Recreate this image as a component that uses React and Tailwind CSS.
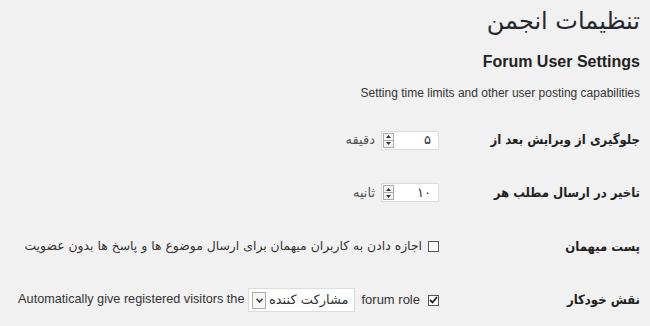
import React from "react";

const fa = { fontFamily: '"DejaVu Sans", "Liberation Sans", sans-serif' };
const faC = { fontFamily: '"DejaVu Sans Condensed", "DejaVu Sans", "Liberation Sans", sans-serif', fontStretch: "condensed" };

function NumberInput({ value }) {
  return (
    <div className="flex h-[19px] w-[58px] items-center border border-[#dcdcdc] bg-white">
      <span className="flex-1 pr-[7px] text-right text-[13px] text-[#333]" style={fa}>{value}</span>
      <div className="ml-[1px] flex h-[15px] w-[11px] flex-col border border-[#aaa] bg-[#f6f6f6]">
        <div className="flex flex-1 items-center justify-center border-b border-[#aaa]">
          <svg width="5" height="3" viewBox="0 0 5 3"><path d="M0 3 L2.5 0 L5 3Z" fill="#333" /></svg>
        </div>
        <div className="flex flex-1 items-center justify-center">
          <svg width="5" height="3" viewBox="0 0 5 3"><path d="M0 0 L2.5 3 L5 0Z" fill="#333" /></svg>
        </div>
      </div>
    </div>
  );
}

function Checkbox({ checked }) {
  return (
    <span className="inline-flex h-[11px] w-[11px] shrink-0 items-center justify-center border border-[#555] bg-white">
      {checked && (
        <svg width="9" height="8" viewBox="0 0 9 8">
          <path d="M1 4 L3.5 6.5 L8 1" stroke="#222" strokeWidth="1.8" fill="none" />
        </svg>
      )}
    </span>
  );
}

function Row({ label, children, h }) {
  return (
    <div className={`flex items-center ${h}`}>
      <div className="w-[201px] shrink-0 text-[13px] font-bold text-[#222]" style={faC}>{label}</div>
      <div className="flex items-center">{children}</div>
    </div>
  );
}

export default function App() {
  return (
    <div dir="rtl" className="h-[326px] w-[650px] overflow-hidden bg-[#f1f1f1] pr-[10px] text-[#333]" style={{ fontFamily: '"Liberation Sans", Arial, sans-serif' }}>
      <h1 className="pt-[6px] text-[24px] leading-[30px] text-[#23282d]" style={fa}>تنظیمات انجمن</h1>
      <h2 className="mt-[16px] text-[16px] font-bold leading-[20px] text-[#222]">Forum User Settings</h2>
      <p className="mt-[13px] text-[12px] leading-[16px] text-[#333]">Setting time limits and other user posting capabilities</p>
      <div className="mt-[13px]">
        <Row label="جلوگیری از ویرایش بعد از" h="h-[52px]">
          <NumberInput value="۵" />
          <span className="mr-[6px] text-[13px] text-[#555]" style={fa}>دقیقه</span>
        </Row>
        <Row label="تاخیر در ارسال مطلب هر" h="h-[53px]">
          <NumberInput value="۱۰" />
          <span className="mr-[6px] text-[13px] text-[#555]" style={fa}>ثانیه</span>
        </Row>
        <Row label="پست میهمان" h="h-[55px]">
          <Checkbox />
          <span className="mr-[6px] text-[12.4px] text-[#333]" style={fa}>اجازه دادن به کاربران میهمان برای ارسال موضوع ها و پاسخ ها بدون عضویت</span>
        </Row>
        <Row label="نقش خودکار" h="h-[52px]">
          <Checkbox checked />
          <span className="mr-[8px] text-[13px] text-[#333]">forum role</span>
          <div className="mr-[6px] flex h-[24px] w-[107px] items-center border border-[#dcdcdc] bg-white">
            <span className="flex-1 pr-[6px] text-[13px] text-[#333]" style={fa}>مشارکت کننده</span>
            <div className="ml-[3px] flex h-[17px] w-[14px] items-center justify-center border border-[#aaa] bg-[#f6f6f6]">
              <svg width="7" height="5" viewBox="0 0 7 5"><path d="M0.5 0.8 L3.5 4 L6.5 0.8" stroke="#333" strokeWidth="1.5" fill="none" /></svg>
            </div>
          </div>
          <span className="mr-[4px] text-[12.7px] text-[#333]">Automatically give registered visitors the</span>
        </Row>
      </div>
    </div>
  );
}
